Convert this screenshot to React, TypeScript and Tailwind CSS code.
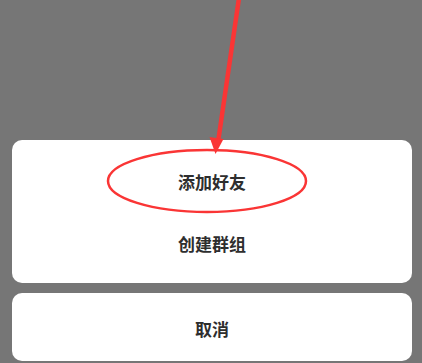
import React from 'react';

export default function App() {
  return (
    <div
      className="relative h-[363px] w-[422px] overflow-hidden bg-[#767676] flex flex-col justify-end pl-3 pr-[10px] pb-[2px]"
      style={{ fontFamily: '"Noto Sans CJK SC", "Noto Sans", sans-serif' }}
    >
      {/* Action sheet */}
      <div className="flex flex-col rounded-[10px] bg-white pt-[11px] pb-[8px]">
        <div className="h-[62px] flex items-center justify-center text-[17px] font-bold text-[#2e2e2e]">
          添加好友
        </div>
        <div className="h-[62px] flex items-center justify-center text-[17px] font-bold text-[#2e2e2e]">
          创建群组
        </div>
      </div>
      <div className="mt-[10px] h-[68px] rounded-[10px] bg-white flex items-center justify-center pt-[4px] text-[17px] font-bold text-[#2e2e2e]">
        取消
      </div>

      {/* Red annotation */}
      <svg className="absolute inset-0 pointer-events-none" width="422" height="363" viewBox="0 0 422 363">
        <ellipse cx="207" cy="181" rx="99" ry="31" fill="none" stroke="#fa3535" strokeWidth="2.5" />
        <line x1="239" y1="-2" x2="218.5" y2="139" stroke="#fa3535" strokeWidth="4.5" />
        <polygon points="209.5,137 223.5,139 215.5,154" fill="#fa3535" />
      </svg>
    </div>
  );
}
